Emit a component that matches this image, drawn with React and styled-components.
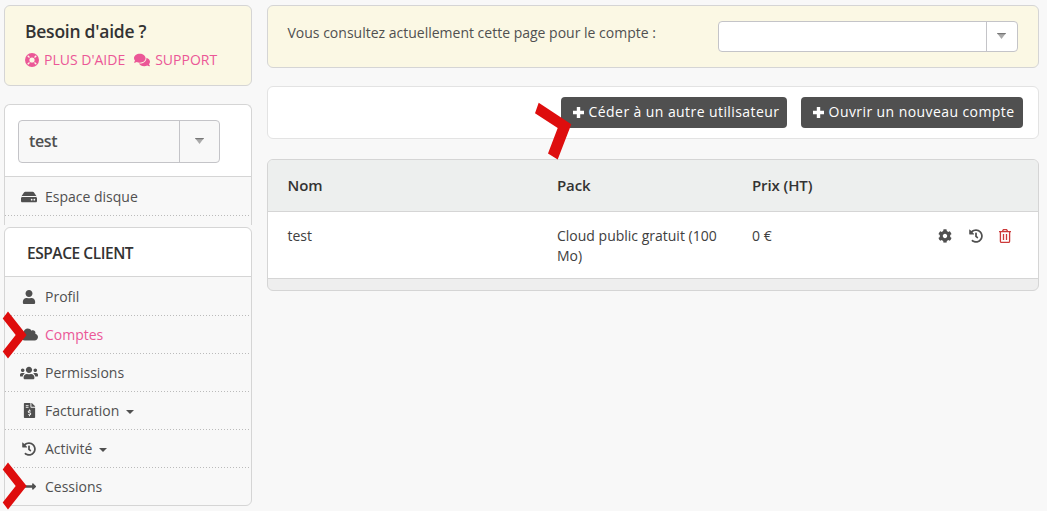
import React from "react";
import styled, { createGlobalStyle, css } from "styled-components";
import {
  FaComments, FaHdd, FaUser, FaCloud, FaUsers, FaFileInvoiceDollar,
  FaHistory, FaLongArrowAltRight, FaCog,
} from "react-icons/fa";

const Global = createGlobalStyle`
  * { box-sizing: border-box; }
  body {
    margin: 0;
    background: #f8f8f8;
    color: #505050;
    font: 14px/20px "Open Sans", sans-serif;
    overflow: hidden;
  }
`;

const Page = styled.div`
  position: relative;
  display: flex;
  gap: 15px;
  width: 1047px;
  height: 511px;
  padding: 5px 8px 0 4px;
`;
const Sidebar = styled.aside`
  width: 248px;
  flex: none;
`;
const Main = styled.main`
  flex: 1;
  min-width: 0;
`;

const frame = css`
  border: 1px solid #d5d5d5;
  border-radius: 6px;
`;
const heading = css`
  color: #333;
  font-weight: 600;
`;

const HelpCard = styled.section`
  ${frame}
  height: 81px;
  padding: 15px 20px;
  background: #fbf8e4;
`;
const HelpTitle = styled.h2`
  ${heading}
  margin: 0 0 9px;
  font-size: 17.5px;
  line-height: 20px;
  letter-spacing: -0.25px;
`;
const HelpLinks = styled.div`
  display: flex;
  gap: 9px;
`;
const HelpLink = styled.a`
  display: flex;
  align-items: center;
  gap: 5px;
  color: #eb5797;
  white-space: nowrap;
`;

const DiskCard = styled.section`
  ${frame}
  height: 121px;
  margin: 18px 0 2px;
  border-bottom: 0;
  border-radius: 6px 6px 0 0;
`;
const PickerArea = styled.div`
  height: 72px;
  padding: 15px 13px;
  background: #fff;
  border-bottom: 1px solid #d5d5d5;
  border-radius: 6px 6px 0 0;
`;
const SelectBox = styled.div`
  display: flex;
  width: ${(p) => p.$width}px;
  height: ${(p) => p.$height}px;
  background: ${(p) => p.$fill};
  border: 1px solid #c4c4c8;
  border-radius: 4px;
`;
const SelectValue = styled.span`
  flex: 1;
  display: flex;
  align-items: center;
  padding: 0 0 2px 10px;
  font-size: 16px;
  font-weight: 600;
  letter-spacing: -0.4px;
`;
const SelectToggle = styled.span`
  display: flex;
  align-items: center;
  justify-content: center;
  width: ${(p) => p.$width}px;
  padding: 0 1px 1px 0;
  border-left: 1px solid #c4c4c8;
`;

const MenuCard = styled.section`
  ${frame}
  height: 279px;
`;
const MenuTitle = styled.h3`
  ${heading}
  height: 49px;
  margin: 0;
  padding-left: 22px;
  font-size: 15.5px;
  line-height: 50px;
  letter-spacing: -0.45px;
  background: #fff;
  border-bottom: 1px solid #d5d5d5;
  border-radius: 6px 6px 0 0;
`;
const MenuList = styled.nav`
  padding-top: 1px;
`;
const MenuItem = styled.a`
  display: flex;
  align-items: center;
  height: 38px;
  padding: 0 0 1px 15px;
  color: ${(p) => (p.$active ? "#eb5797" : "#505050")};
  background: ${(p) => (p.$last
    ? "none"
    : "linear-gradient(90deg, #bbb 1px, transparent 1px) 0 100% / 3px 1px repeat-x")};
`;
const MenuIcon = styled.span`
  display: flex;
  justify-content: center;
  width: 18px;
  margin-right: 7px;
  color: #505050;
`;
const Caret = styled.i`
  margin: 3px 0 0 7px;
  border: 4px solid transparent;
  border-top-color: currentColor;
  border-bottom: 0;
`;

const AccountBar = styled.section`
  ${frame}
  display: flex;
  justify-content: space-between;
  height: 63px;
  padding: 15px 20px 15px 19.5px;
  background: #fbf8e4;
`;
const AccountText = styled.span`
  padding-top: 2px;
`;
const ActionBar = styled.section`
  ${frame}
  display: flex;
  justify-content: flex-end;
  gap: 14px;
  height: 53px;
  margin: 18px 0 20px;
  padding: 10px 15px;
  border-color: #e3e3e3;
  background: #fff;
`;
const ActionButton = styled.button`
  display: flex;
  align-items: center;
  gap: 4.6px;
  width: ${(p) => p.$width}px;
  height: 31px;
  padding: 0 0 1px 12px;
  border: 0;
  border-radius: 4px;
  background: #505050;
  color: #fff;
  font: inherit;
  letter-spacing: 0.42px;
  white-space: nowrap;
`;

const Table = styled.section`
  ${frame}
  height: 132px;
  overflow: hidden;
  background: #eee;
`;
const TableRow = styled.div`
  display: grid;
  grid-template-columns: 269.5px 195px 1fr auto;
  padding: 14px 27px 0 19.5px;
  height: ${(p) => (p.$head ? 52 : 67)}px;
  background: ${(p) => (p.$head ? "#edefee" : "#fff")};
  border-bottom: 1px solid #d5d5d5;
  color: #404040;
  ${(p) => p.$head && css`
    ${heading}
    padding-top: 15px;
    font-size: 15px;
    letter-spacing: -0.1px;
  `}
`;
const PackName = styled.span`
  width: 175px;
`;
const RowActions = styled.span`
  display: flex;
  align-items: center;
  gap: 16.5px;
  height: 20px;
  color: #505050;
`;

const Marker = styled.svg`
  position: absolute;
  left: ${(p) => p.$x}px;
  top: ${(p) => p.$y}px;
  fill: #de0d0d;
`;

const Triangle = () => (
  <svg width="9" height="6" viewBox="0 0 9 6">
    <path d="M0 0h9L4.5 6z" fill="#aaa" />
    <path d="M0 0h9l-.8 1.2H.8z" fill="#777" />
  </svg>
);
const Plus = () => (
  <svg width="11" height="11" viewBox="0 0 11 11">
    <path d="M3.8 0h3.4v3.8H11v3.4H7.2V11H3.8V7.2H0V3.8h3.8z" fill="#fff" />
  </svg>
);
const LifeRing = () => (
  <svg width="14" height="14" viewBox="0 0 14 14" fill="none">
    <circle cx="7" cy="7" r="4.8" stroke="currentColor" strokeWidth="4.4" />
    <path d="M2.7 2.7l1.8 1.8M11.3 2.7L9.5 4.5M2.7 11.3l1.8-1.8M11.3 11.3L9.5 9.5" stroke="#fbf8e4" strokeWidth="1.3" />
  </svg>
);
const Trash = () => (
  <svg width="12" height="14" viewBox="0 0 12 14" fill="none" stroke="#cc3a3a" strokeWidth="1.3">
    <path d="M0 2.6h12M3.4 2.4L4.4.7h3.2l1 1.7M1.4 2.8v9.4q0 1.2 1.2 1.2h6.8q1.2 0 1.2-1.2V2.8M4.5 5v6M7.5 5v6" />
  </svg>
);

const menu = [
  { label: "Profil", icon: <FaUser size={14} /> },
  { label: "Comptes", icon: <FaCloud size={17} />, active: true },
  { label: "Permissions", icon: <FaUsers size={18} /> },
  { label: "Facturation", icon: <FaFileInvoiceDollar size={15} />, caret: true },
  { label: "Activité", icon: <FaHistory size={14} />, caret: true },
  { label: "Cessions", icon: <FaLongArrowAltRight size={15} /> },
];

export default function App() {
  return (
    <Page>
      <Global />
      <Sidebar>
        <HelpCard>
          <HelpTitle>Besoin d'aide ?</HelpTitle>
          <HelpLinks>
            <HelpLink><LifeRing />PLUS D'AIDE</HelpLink>
            <HelpLink><FaComments size={16} />SUPPORT</HelpLink>
          </HelpLinks>
        </HelpCard>
        <DiskCard>
          <PickerArea>
            <SelectBox $width={202} $height={43} $fill="#f8f8f8">
              <SelectValue>test</SelectValue>
              <SelectToggle $width={40}><Triangle /></SelectToggle>
            </SelectBox>
          </PickerArea>
          <MenuList>
            <MenuItem><MenuIcon><FaHdd size={16} /></MenuIcon>Espace disque</MenuItem>
          </MenuList>
        </DiskCard>
        <MenuCard>
          <MenuTitle>ESPACE CLIENT</MenuTitle>
          <MenuList>
            {menu.map((m, i) => (
              <MenuItem key={m.label} $active={m.active} $last={i === menu.length - 1}>
                <MenuIcon>{m.icon}</MenuIcon>
                {m.label}
                {m.caret && <Caret />}
              </MenuItem>
            ))}
          </MenuList>
        </MenuCard>
      </Sidebar>
      <Main>
        <AccountBar>
          <AccountText>Vous consultez actuellement cette page pour le compte :</AccountText>
          <SelectBox $width={300} $height={31} $fill="#fff">
            <SelectValue />
            <SelectToggle $width={31}><Triangle /></SelectToggle>
          </SelectBox>
        </AccountBar>
        <ActionBar>
          <ActionButton $width={226}><Plus />Céder à un autre utilisateur</ActionButton>
          <ActionButton $width={222}><Plus />Ouvrir un nouveau compte</ActionButton>
        </ActionBar>
        <Table>
          <TableRow $head><span>Nom</span><span>Pack</span><span>Prix (HT)</span></TableRow>
          <TableRow>
            <span>test</span>
            <PackName>Cloud public gratuit (100 Mo)</PackName>
            <span>0 €</span>
            <RowActions><FaCog size={14} /><FaHistory size={14} /><Trash /></RowActions>
          </TableRow>
        </Table>
      </Main>
      <Marker $x={2} $y={311} width="26" height="48"><path d="M6 .6L24.6 24 6 47.4.7 40.5 13.7 24 .7 7.5z" /></Marker>
      <Marker $x={2} $y={462} width="26" height="48"><path d="M6 .6L24.6 24 6 47.4.7 40.5 13.7 24 .7 7.5z" /></Marker>
      <Marker $x={534} $y={102} width="39" height="58"><path d="M4.7.7L37.3 22.3 23.7 57.5 14 51.5 23.7 26 1 11.3z" /></Marker>
    </Page>
  );
}
